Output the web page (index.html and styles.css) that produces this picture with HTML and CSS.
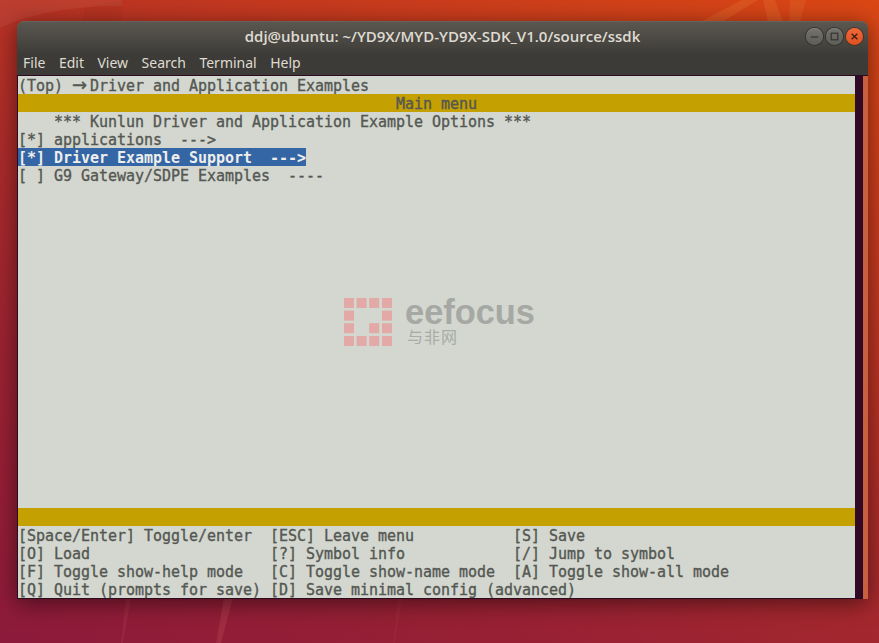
FILE: index.html
```html
<!DOCTYPE html>
<html lang="en">
<head>
<meta charset="utf-8">
<title>ddj@ubuntu: ~/YD9X/MYD-YD9X-SDK_V1.0/source/ssdk</title>
<link rel="stylesheet" href="styles.css">
</head>
<body>
<svg class="wallpaper" viewBox="0 0 879 643" preserveAspectRatio="none" aria-hidden="true">
  <path d="M0 0H122V6C75 6 30 13 0 28Z" fill="#fff" opacity=".055"/>
  <path d="M122 0V17L120 22H82L84 8Z" fill="#000" opacity=".03"/>
  <path d="M700 22 L742 0H758L722 22Z" fill="#f6a04a" opacity=".16"/>
  <path d="M763 0H775L783 22H768Z" fill="#f6a04a" opacity=".16"/>
  <path d="M790 0H806L800 22H789Z" fill="#f6a04a" opacity=".13"/>
  <path d="M224 598H233L221 643H216Z" fill="#f27a7a" opacity=".16"/>
  <path d="M126 598H131L123 643H121Z" fill="#f27a7a" opacity=".1"/>
  <path d="M398 598H402L395 643H393Z" fill="#f27a7a" opacity=".06"/>
</svg>
<main class="window">
  <header class="titlebar">
    <span></span>
    <h1 class="title">ddj@ubuntu: ~/YD9X/MYD-YD9X-SDK_V1.0/source/ssdk</h1>
    <div class="controls">
      <span class="btn"><svg viewBox="0 0 18 18"><path d="M5 9.5H13" class="glyph"/></svg></span>
      <span class="btn"><svg viewBox="0 0 18 18"><rect x="5.5" y="5.5" width="7" height="7" class="glyph"/></svg></span>
      <span class="btn btn-close"><svg viewBox="0 0 18 18"><path d="M6 6L12 12M12 6L6 12" class="glyph glyph-dark"/></svg></span>
    </div>
  </header>
  <nav class="menubar">
    <span>File</span><span>Edit</span><span>View</span><span>Search</span><span>Terminal</span><span>Help</span>
  </nav>
  <section class="terminal">
    <div class="screen">
      <div class="row">(Top) <span class="arrow">→</span>Driver and Application Examples</div>
      <div class="row band">                                          Main menu</div>
      <div class="row">    *** Kunlun Driver and Application Example Options ***</div>
      <div class="row">[*] applications  ---&gt;</div>
      <div class="row"><span class="selected">[*] Driver Example Support  ---&gt;</span></div>
      <div class="row">[ ] G9 Gateway/SDPE Examples  ----</div>
      <div class="fill"></div>
      <div class="row band"></div>
      <div class="row">[Space/Enter] Toggle/enter  [ESC] Leave menu           [S] Save</div>
      <div class="row">[O] Load                    [?] Symbol info            [/] Jump to symbol</div>
      <div class="row">[F] Toggle show-help mode   [C] Toggle show-name mode  [A] Toggle show-all mode</div>
      <div class="row">[Q] Quit (prompts for save) [D] Save minimal config (advanced)</div>
      <div class="watermark">
        <svg class="wm-logo" viewBox="0 0 48 48" aria-hidden="true">
          <g fill="#e2a9a6">
            <rect x="0" y="0" width="10" height="10"/><rect x="12.6" y="0" width="10" height="10"/><rect x="25.2" y="0" width="10" height="10"/><rect x="38" y="0" width="10" height="10"/>
            <rect x="0" y="12.6" width="10" height="10"/><rect x="38" y="12.6" width="10" height="10"/>
            <rect x="0" y="25.2" width="10" height="10"/><rect x="25.2" y="25.2" width="10" height="10"/><rect x="38" y="25.2" width="10" height="10"/>
            <rect x="0" y="38" width="10" height="10"/><rect x="12.6" y="38" width="10" height="10"/><rect x="25.2" y="38" width="10" height="10"/><rect x="38" y="38" width="10" height="10"/>
          </g>
        </svg>
        <div class="wm-text">
          <div class="wm-name">eefocus</div>
          <div class="wm-cn">与非网</div>
        </div>
      </div>
    </div>
    <div class="gutter"></div>
    <div class="edge"></div>
  </section>
</main>
</body>
</html>
```

FILE: styles.css
```css
* { box-sizing: border-box; }

html, body { margin: 0; height: 100%; }

body {
  position: relative;
  width: 879px;
  height: 643px;
  overflow: hidden;
  padding: 21px 11px 44px 17px;
  background: linear-gradient(24deg, #8c1a3a 0%, #9a2232 28%, #ae2d28 52%, #c4391f 74%, #da4714 100%);
}

.wallpaper {
  position: absolute;
  inset: 0;
  width: 879px;
  height: 643px;
}

.window {
  position: relative;
  display: flex;
  flex-direction: column;
  width: 851px;
  height: 578px;
  border-radius: 7px 7px 0 0;
  box-shadow: 0 4px 22px rgba(0, 0, 0, .5);
}

.titlebar {
  display: grid;
  grid-template-columns: 1fr auto 1fr;
  align-items: center;
  height: 32px;
  flex: none;
  padding: 0 5px;
  border-radius: 7px 7px 0 0;
  border-top: 1px solid #65625b;
  background: linear-gradient(#5a5750, #3f3d39);
}

.title {
  margin: 0;
  font: 600 15px "Open Sans", "Noto Sans", sans-serif;
  color: #dfdbd2;
  white-space: nowrap;
  position: relative;
  top: -2px;
}

.controls {
  display: flex;
  justify-content: flex-end;
  gap: 3px;
  position: relative;
  top: -1px;
}

.btn {
  width: 17px;
  height: 17px;
  border-radius: 50%;
  background: linear-gradient(#74726d, #5f5d58);
  box-shadow: 0 0 0 1px #35332f, inset 0 1px 0 rgba(255, 255, 255, .12);
  display: block;
}

.btn svg { display: block; width: 17px; height: 17px; }

.btn-close {
  background: linear-gradient(#f0683a, #e0501f);
  box-shadow: 0 0 0 1px #4a3226;
}

.glyph {
  fill: none;
  stroke: #33312e;
  stroke-width: 1.2;
}

.glyph-dark { stroke: #3b2116; stroke-width: 1.5; }

.menubar {
  display: flex;
  align-items: center;
  gap: 13.5px;
  height: 22px;
  flex: none;
  padding: 0 0 3px 6px;
  background: #3d3b37;
  color: #dfdbd2;
  font: 14px "Noto Sans", sans-serif;
}

.terminal {
  display: flex;
  flex: 1;
  min-height: 0;
  border-top: 1px solid #2c0a22;
  border-left: 1px solid #2c0a22;
  border-bottom: 1px solid #2c0a22;
}

.screen {
  position: relative;
  display: flex;
  flex-direction: column;
  width: 837px;
  flex: none;
  background: #d3d7cf;
  color: #555753;
  font: 400 15px "DejaVu Sans Mono", monospace;
  -webkit-text-stroke: .35px #555753;
  letter-spacing: -.03px;
}

.row {
  height: 18px;
  line-height: 21px;
  flex: none;
  white-space: pre;
}

.fill { flex: 1; }

.band { background: #c4a000; }

.selected {
  display: inline-block;
  height: 18px;
  vertical-align: top;
  background: #3465a4;
  color: #eeeeec;
  font-weight: 700;
  -webkit-text-stroke: 0;
}

.arrow {
  display: inline-block;
  width: 18px;
  font: 18px/18px "DejaVu Sans", sans-serif;
  letter-spacing: 0;
}

.gutter {
  width: 8px;
  flex: none;
  background: #300a24;
}

.edge {
  width: 5px;
  flex: none;
  margin-bottom: -1px;
  background: #c8603f;
}

.watermark {
  position: absolute;
  left: 326px;
  top: 222px;
  display: flex;
  gap: 14px;
  letter-spacing: 0;
  -webkit-text-stroke: 0;
}

.wm-logo { display: block; width: 48px; height: 48px; }

.wm-text { display: flex; flex-direction: column; margin-left: -1px; }

.wm-name {
  font: 700 34.4px/28px "Liberation Sans", sans-serif;
  color: #a6a8a4;
  height: 30px;
}

.wm-cn {
  font: 16px/18px "Noto Sans CJK SC", sans-serif;
  letter-spacing: 1px;
  color: #a9aba7;
  margin: -1px 0 0 2px;
}
```
